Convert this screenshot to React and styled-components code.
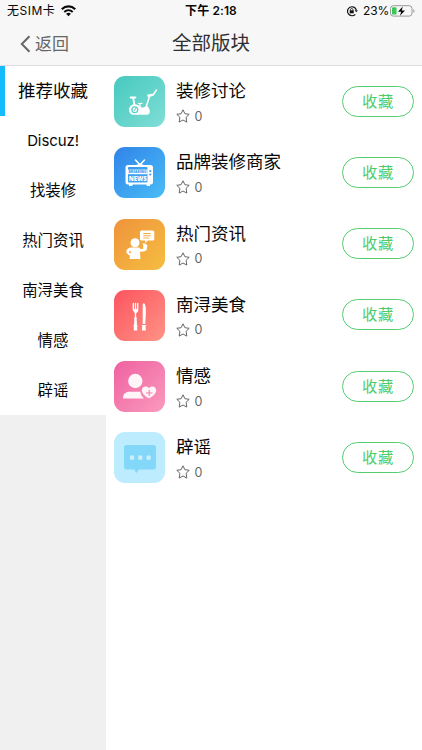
import React from 'react';
import styled, { createGlobalStyle } from 'styled-components';

const GlobalStyle = createGlobalStyle`
  * { box-sizing: border-box; }
  body { margin: 0; background: #fff; }
  button { font: inherit; border: 0; background: none; padding: 0; }
  svg { display: block; flex: none; }
`;

const Screen = styled.div`
  width: 422px;
  height: 750px;
  display: flex;
  flex-direction: column;
  overflow: hidden;
  background: #fff;
  color: #080808;
  font-family: Inter, 'Noto Sans CJK SC', sans-serif;
`;

const Header = styled.header`
  height: 66px;
  flex: none;
  background: #f7f7f7;
  border-bottom: 1px solid #dcdcdc;
`;

const StatusBar = styled.div`
  height: 21px;
  display: grid;
  grid-template-columns: 1fr auto 1fr;
  align-items: center;
  padding: 1px 7px 0 7px;
  font-size: 12px;
  line-height: 20px;
`;

const Carrier = styled.div`
  display: flex;
  align-items: center;
  gap: 6px;
  letter-spacing: 0.5px;
`;

const Clock = styled.div`
  font-weight: 600;
  font-size: 12px;
  letter-spacing: 0.1px;
`;

const Power = styled.div`
  display: flex;
  align-items: center;
  justify-content: flex-end;
`;

const Percent = styled.span`
  margin: 0 1px 0 5px;
  letter-spacing: -0.2px;
`;

const NavBar = styled.div`
  height: 44px;
  display: grid;
  grid-template-columns: 1fr auto 1fr;
  align-items: center;
  padding: 0 0 0 20px;
`;

const Back = styled.button`
  display: flex;
  align-items: center;
  gap: 4px;
  padding-top: 1px;
  color: #666;
  font-size: 17px;
  line-height: 24px;
`;

const Title = styled.h1`
  margin: 0 20px 0 0;
  font-size: 19.5px;
  line-height: 28px;
  font-weight: 400;
  color: #303030;
`;

const Content = styled.div`
  flex: 1;
  display: flex;
`;

const Sidebar = styled.nav`
  width: 106px;
  flex: none;
  background: #f0f0f0;
`;

const Category = styled.div`
  height: ${(p) => (p.$active ? 49.5 : 49.9)}px;
  display: flex;
  align-items: center;
  justify-content: center;
  background: #fff;
  border-left: ${(p) => (p.$active ? '5px solid #16baff' : '0')};
  padding-top: ${(p) => (p.$active ? 0 : 2)}px;
  padding-right: ${(p) => (p.$active ? 5 : 0)}px;
  font-size: ${(p) => (p.$active ? 17.5 : 15.4)}px;
  line-height: 24px;
`;

const Latin = styled.span`
  font-size: 15px;
  letter-spacing: -0.1px;
`;

const BoardList = styled.main`
  flex: 1;
  padding-top: 10px;
`;

const Board = styled.div`
  height: 71.25px;
  display: flex;
  align-items: flex-start;
  padding: 0 8px;
`;

const BoardInfo = styled.div`
  flex: 1;
  padding-left: 11px;
`;

const BoardName = styled.div`
  height: 28px;
  font-size: 17.5px;
  line-height: 30px;
`;

const Favorites = styled.div`
  display: flex;
  align-items: center;
  gap: 4.5px;
  height: 24px;
  color: #666;
  font-size: 12.5px;
`;

const CollectButton = styled.button`
  width: 72px;
  height: 31px;
  margin-top: 9.5px;
  border: 1px solid #55cd70;
  border-radius: 16px;
  color: #4dcc69;
  font-size: 15.3px;
  line-height: 28px;
  letter-spacing: 0.8px;
  padding: 1px 0 0;
`;

const IconTile = styled.div`
  width: 51px;
  height: 51px;
  flex: none;
  border-radius: 11px;
  background: ${(p) => p.$fill};
`;

const Glyph = ({ children }) => (
  <svg width="51" height="51" viewBox="0 0 51 51" fill="#fff">{children}</svg>
);

const BikeIcon = () => (
  <Glyph>
    <g fill="none" stroke="#fff" strokeLinecap="round">
      <path d="M16.500 21.500h5" strokeWidth="1.800" />
      <path d="M19.200 22l1.300 7" strokeWidth="1.800" />
      <path d="M31.500 33l4-12.500M34.500 20.500l4.500-1.500 3.500-5" strokeWidth="1.500" />
      <path d="M34 19.500l4-.8" strokeWidth="2" />
      <path d="M24.500 27.500l3.500-.2M26 28v3" strokeWidth="1.200" />
    </g>
    <path d="M15 34c0-4 3-5.800 6-5.800 4 0 5 3.300 7.500 3.300s2.500-1.500 4-1.500 3.300 3 3.300 5.500c0 2-1 3.300-3 3.300H20c-3 0-5-1.800-5-4.800z" />
    <circle cx="20.800" cy="33.700" r="2.900" fill="none" stroke="#5bd0c7" strokeWidth="1.300" />
    <path d="M20 35l2-3" fill="none" stroke="#5bd0c7" strokeWidth="1" />
  </Glyph>
);

const TvText = styled.text`
  font-family: 'Open Sans', sans-serif;
  font-weight: 800;
`;

const TvIcon = () => (
  <Glyph>
    <path d="M21.500 13l4.500 4.800 4.500-4.800" fill="none" stroke="#fff" strokeWidth="1.500" strokeLinecap="round" />
    <path d="M22 18.500c1-2 7-2 8 0z" />
    <path fillRule="evenodd" d="M14 18h22.500a2.500 2.500 0 0 1 2.500 2.500v14.500a2.500 2.500 0 0 1-2.500 2.500H14a2.500 2.500 0 0 1-2.500-2.500V20.500A2.500 2.500 0 0 1 14 18zM15 20a1 1 0 0 0-1 1V34.500a1 1 0 0 0 1 1h17.500a1 1 0 0 0 1-1V21a1 1 0 0 0-1-1z" />
    <path d="M15 37h4l-1 2h-3zM32 37h4v2h-3z" />
    <rect x="14" y="22.600" width="19.500" height="4.600" />
    <TvText x="14.500" y="26.400" fontSize="4.200" textLength="18" lengthAdjust="spacingAndGlyphs" fill="#3d9bed">BREAKING</TvText>
    <TvText x="14.700" y="33.500" fontSize="6.600" textLength="18" lengthAdjust="spacingAndGlyphs">NEWS</TvText>
    <circle cx="36.300" cy="24" r="1.100" fill="#3998ed" />
    <circle cx="36.300" cy="27.500" r="1.100" fill="#3998ed" />
  </Glyph>
);

const SpeakerIcon = () => (
  <Glyph>
    <circle cx="21" cy="23.700" r="4.500" />
    <path d="M17 28.500h8c1.200 1.500 2.200 1.800 4.200 1.300V26.500l-.8-2.200 2.800.3 2.200 1.600-.6 4.300c-.5 2-4.600 2.300-6.800 2.200l.4 7.300H15.500l.5-3.300c-1.500-.6-3.500-2.500-3.800-4 .2-2 2.300-4.200 4.800-4.200z" />
    <path d="M16.800 31.500l-2.100 1.500 1.700 1.900z" fill="#f0a23a" />
    <path d="M27.500 11.500h11.300a1.500 1.500 0 0 1 1.500 1.500v7a1.500 1.500 0 0 1-1.500 1.500h-5l-2.500 2.500v-2.500h-3.800A1.500 1.500 0 0 1 26 20v-7a1.500 1.500 0 0 1 1.500-1.500z" />
    <path d="M29.300 14.500h7.500M29.300 16.800h7.500M29.300 19h5.500" stroke="#f3ac40" strokeWidth="1" />
  </Glyph>
);

const DiningIcon = () => (
  <Glyph>
    <path d="M19.300 13.300v6q0 2 2.200 2.700t2.200-2.700v-6M21.500 13.300v20" fill="none" stroke="#fff" strokeWidth="1.300" strokeLinecap="round" />
    <path d="M19.300 19h4.400l-1.200 4h-2zM20.500 27h2l.8 13.500h-3.600z" />
    <path d="M28.700 34V15.500c0-2 1-2.700 1.800-1.800 1.800 2.300 1.600 8.300.8 20.300zM28.400 35h3l.5 5.500h-4z" />
    <path d="M19.300 36h4.400M27.800 35.500h4.400" stroke="#fff" />
  </Glyph>
);

const PersonIcon = () => (
  <Glyph>
    <g fill="#fff4f8">
      <circle cx="21.300" cy="20" r="7.200" />
      <path d="M9 37.500c0-4.500 2.500-6.700 6.500-6.700h10.800c.7 3 1.500 4.700 3.700 6.700z" />
      <path d="M35 37.500c-3.800-2.500-7.200-5-7.200-8.300 0-4 5.200-5 7.200-1.900 2-3.100 7.200-2.100 7.200 1.900 0 3.300-3.400 5.800-7.200 8.300z" />
    </g>
    <path d="M32 32h6.500M35.200 29v6" stroke="#f680ae" strokeWidth="1.100" />
  </Glyph>
);

const ChatIcon = () => (
  <Glyph>
    <path d="M12.500 13h27a2.500 2.500 0 0 1 2.500 2.500v19.500a2.500 2.500 0 0 1-2.500 2.500H25L22 41.300l-1.500-3.800h-8A2.500 2.500 0 0 1 10 35V15.500A2.500 2.500 0 0 1 12.500 13z" fill="#83d7f8" />
    <g fill="#cceefa">
      <circle cx="18" cy="25.700" r="2.400" />
      <circle cx="26.300" cy="25.700" r="2.400" />
      <circle cx="34.600" cy="25.700" r="2.400" />
    </g>
  </Glyph>
);

const StarIcon = () => (
  <svg width="14" height="14" viewBox="0 0 14 14" fill="none" stroke="#666" strokeWidth="1" strokeLinejoin="round">
    <path d="M7 .8l1.900 3.900 4.300.6-3.100 3 .7 4.800L7 11l-3.800 2.100.7-4.800-3.100-3 4.300-.6z" />
  </svg>
);

const WifiIcon = () => (
  <svg width="15" height="12" viewBox="0 0 15 12" fill="none" stroke="#080808">
    <path d="M.8 4.200c3.900-3.700 9.500-3.700 13.400 0" strokeWidth="2.200" />
    <path d="M3.300 6.900c2.500-2.300 5.900-2.300 8.400 0" strokeWidth="2" />
    <path d="M5.100 8.800q2.400-1.900 4.800 0L7.500 11.200z" fill="#080808" stroke="none" />
  </svg>
);

const LockIcon = () => (
  <svg width="12" height="12" viewBox="0 0 12 12" fill="none" stroke="#111">
    <path d="M9.300 9.300A4.500 4.500 0 1 1 10.300 5" strokeWidth="1.200" />
    <path d="M8.600 5.300h3.200l-1.500 2z" fill="#111" stroke="none" />
    <rect x="3.700" y="5.300" width="4" height="3" fill="#111" stroke="none" />
    <path d="M4.500 5.500v-.8a1.200 1.200 0 0 1 2.400 0v.8" strokeWidth=".8" />
  </svg>
);

const BatteryIcon = () => (
  <svg width="25" height="12" viewBox="0 0 25 12">
    <rect x=".5" y=".7" width="21.500" height="10.400" rx="2.800" fill="none" stroke="#999" />
    <rect x="2" y="2.200" width="4.500" height="7.400" rx="1.200" fill="#34c759" />
    <path d="M12.700 1.500L8 6.700h3.100L10 10.700l5-5.300h-3.200z" fill="#080808" />
    <path d="M23.300 4v3.800q1.200-.6 1.200-1.900t-1.200-1.900z" fill="#999" />
  </svg>
);

const BackIcon = () => (
  <svg width="11" height="18" viewBox="0 0 11 18" fill="none" stroke="#666" strokeWidth="2">
    <path d="M9.500 1.200L1.800 9l7.700 7.800" />
  </svg>
);

const categories = ['推荐收藏', 'Discuz!', '找装修', '热门资讯', '南浔美食', '情感', '辟谣'];

const boards = [
  { name: '装修讨论', Icon: BikeIcon, fill: 'linear-gradient(135deg,#46c9be,#80ded6)' },
  { name: '品牌装修商家', Icon: TvIcon, fill: 'linear-gradient(135deg,#3183e8,#48bdf6)' },
  { name: '热门资讯', Icon: SpeakerIcon, fill: 'linear-gradient(135deg,#ef933b,#f5be41)' },
  { name: '南浔美食', Icon: DiningIcon, fill: 'linear-gradient(135deg,#fc545f,#ff9385)' },
  { name: '情感', Icon: PersonIcon, fill: 'linear-gradient(135deg,#ef61a1,#fa9abd)' },
  { name: '辟谣', Icon: ChatIcon, fill: '#bdecfe' },
];

export default function App() {
  return (
    <Screen>
      <GlobalStyle />
      <Header>
        <StatusBar>
          <Carrier>无SIM卡<WifiIcon /></Carrier>
          <Clock>下午 2:18</Clock>
          <Power><LockIcon /><Percent>23%</Percent><BatteryIcon /></Power>
        </StatusBar>
        <NavBar>
          <Back><BackIcon />返回</Back>
          <Title>全部版块</Title>
        </NavBar>
      </Header>
      <Content>
        <Sidebar>
          {categories.map((name, i) => (
            <Category key={name} $active={i === 0}>
              {/^[\x20-\x7e]+$/.test(name) ? <Latin>{name}</Latin> : name}
            </Category>
          ))}
        </Sidebar>
        <BoardList>
          {boards.map(({ name, Icon, fill }) => (
            <Board key={name}>
              <IconTile $fill={fill}><Icon /></IconTile>
              <BoardInfo>
                <BoardName>{name}</BoardName>
                <Favorites><StarIcon />0</Favorites>
              </BoardInfo>
              <CollectButton>收藏</CollectButton>
            </Board>
          ))}
        </BoardList>
      </Content>
    </Screen>
  );
}
